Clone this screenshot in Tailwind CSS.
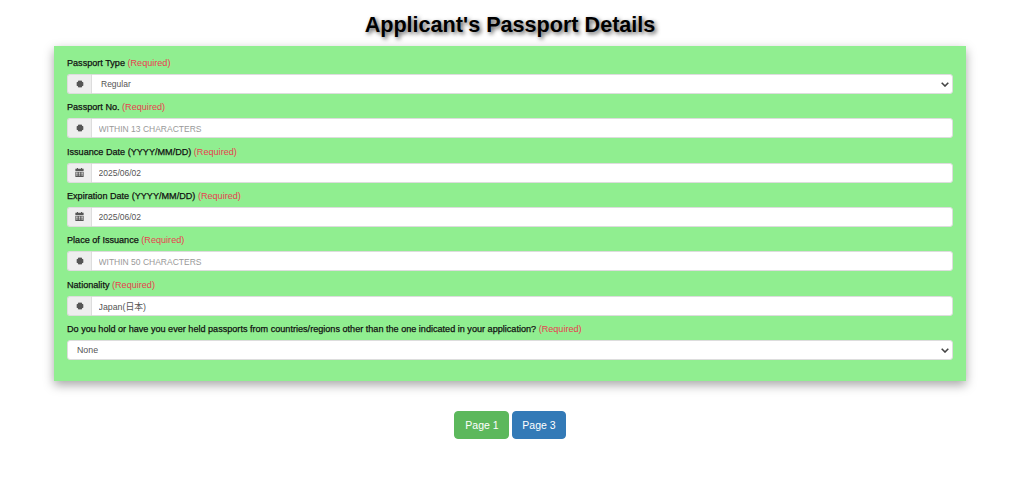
<!DOCTYPE html>
<html lang="en">
<head>
<meta charset="utf-8">
<title>Applicant's Passport Details</title>
<script src="https://cdn.jsdelivr.net/npm/@tailwindcss/browser@4"></script>
</head>
<body class="bg-white font-['Liberation_Sans',Arial,sans-serif] text-[#333]">
<div class="w-[1020px]">
<h1 class="h-[46px] pt-[12px] text-center text-[21.6px] leading-[26px] font-bold text-black [text-shadow:2px_2px_4px_#555]">Applicant's Passport Details</h1>
<main class="mx-[54px] h-[335px] w-[912px] bg-[#90ee90] px-[13px] pt-[11px] shadow-[0_4px_10px_rgba(0,0,0,0.35)]">
  <form class="flex flex-col gap-[7.33px]">
    <div>
      <label class="mb-[4px] block h-[13px] text-[9.1px] leading-[13px] text-[#111] [-webkit-text-stroke:0.25px_#111]">Passport Type <span class="text-[#e8404f] [-webkit-text-stroke:0]">(Required)</span></label>
      <div class="flex h-[20px]">
        <span class="flex w-[24px] items-center justify-center rounded-l-[3px] border border-r-0 border-[#ddd] bg-[#eee]">
          <svg class="size-[8px] fill-[#555]" viewBox="0 0 24 24"><path d="M12 0 14.330 3.310 18 1.610 18.360 5.640 22.390 6 20.690 9.670 24 12 20.690 14.330 22.390 18 18.360 18.360 18 22.390 14.330 20.690 12 24 9.670 20.690 6 22.390 5.640 18.360 1.610 18 3.310 14.330 0 12 3.310 9.670 1.610 6 5.640 5.640 6 1.610 9.670 3.310z"/></svg>
        </span>
        <div class="relative min-w-0 flex-1">
          <select class="block h-full w-full appearance-none rounded-r-[3px] border border-[#ddd] bg-white pt-[1px] pl-[9px] text-[8.5px] text-[#555] outline-none"><option>Regular</option></select>
          <svg class="pointer-events-none absolute top-[8px] right-[4px] h-[5px] w-[8px] fill-none stroke-[#444] stroke-[1.6]" viewBox="0 0 8 5"><path d="M.7.8 4 4l3.300-3.200"/></svg>
        </div>
      </div>
    </div>
    <div>
      <label class="mb-[4px] block h-[13px] text-[9.1px] leading-[13px] text-[#111] [-webkit-text-stroke:0.25px_#111]">Passport No. <span class="text-[#e8404f] [-webkit-text-stroke:0]">(Required)</span></label>
      <div class="flex h-[20px]">
        <span class="flex w-[24px] items-center justify-center rounded-l-[3px] border border-r-0 border-[#ddd] bg-[#eee]">
          <svg class="size-[8px] fill-[#555]" viewBox="0 0 24 24"><path d="M12 0 14.330 3.310 18 1.610 18.360 5.640 22.390 6 20.690 9.670 24 12 20.690 14.330 22.390 18 18.360 18.360 18 22.390 14.330 20.690 12 24 9.670 20.690 6 22.390 5.640 18.360 1.610 18 3.310 14.330 0 12 3.310 9.670 1.610 6 5.640 5.640 6 1.610 9.670 3.310z"/></svg>
        </span>
        <input class="h-full min-w-0 flex-1 rounded-r-[3px] border border-[#ddd] bg-white px-[6.500px] pt-[1px] text-[8.5px] text-[#555] outline-none placeholder:text-[#999]" placeholder="WITHIN 13 CHARACTERS">
      </div>
    </div>
    <div>
      <label class="mb-[4px] block h-[13px] text-[9.1px] leading-[13px] text-[#111] [-webkit-text-stroke:0.25px_#111]">Issuance Date (YYYY/MM/DD) <span class="text-[#e8404f] [-webkit-text-stroke:0]">(Required)</span></label>
      <div class="flex h-[20px]">
        <span class="flex w-[24px] items-center justify-center rounded-l-[3px] border border-r-0 border-[#ddd] bg-[#eee]">
          <svg class="size-[9px] fill-[#555]" viewBox="0 0 24 24"><path d="M1 2h4V0h3v2h8V0h3v2h4v22H1zM1 8v2h22V8zM3 12v3h4v-3zm7 0v3h4v-3zm7 0v3h4v-3zM3 17v3h4v-3zm7 0v3h4v-3zm7 0v3h4v-3z"/></svg>
        </span>
        <input class="h-full min-w-0 flex-1 rounded-r-[3px] border border-[#ddd] bg-white px-[6.500px] pt-[1px] text-[8.5px] text-[#555] outline-none" value="2025/06/02">
      </div>
    </div>
    <div>
      <label class="mb-[4px] block h-[13px] text-[9.1px] leading-[13px] text-[#111] [-webkit-text-stroke:0.25px_#111]">Expiration Date (YYYY/MM/DD) <span class="text-[#e8404f] [-webkit-text-stroke:0]">(Required)</span></label>
      <div class="flex h-[20px]">
        <span class="flex w-[24px] items-center justify-center rounded-l-[3px] border border-r-0 border-[#ddd] bg-[#eee]">
          <svg class="size-[9px] fill-[#555]" viewBox="0 0 24 24"><path d="M1 2h4V0h3v2h8V0h3v2h4v22H1zM1 8v2h22V8zM3 12v3h4v-3zm7 0v3h4v-3zm7 0v3h4v-3zM3 17v3h4v-3zm7 0v3h4v-3zm7 0v3h4v-3z"/></svg>
        </span>
        <input class="h-full min-w-0 flex-1 rounded-r-[3px] border border-[#ddd] bg-white px-[6.500px] pt-[1px] text-[8.5px] text-[#555] outline-none" value="2025/06/02">
      </div>
    </div>
    <div>
      <label class="mb-[4px] block h-[13px] text-[9.1px] leading-[13px] text-[#111] [-webkit-text-stroke:0.25px_#111]">Place of Issuance <span class="text-[#e8404f] [-webkit-text-stroke:0]">(Required)</span></label>
      <div class="flex h-[20px]">
        <span class="flex w-[24px] items-center justify-center rounded-l-[3px] border border-r-0 border-[#ddd] bg-[#eee]">
          <svg class="size-[8px] fill-[#555]" viewBox="0 0 24 24"><path d="M12 0 14.330 3.310 18 1.610 18.360 5.640 22.390 6 20.690 9.670 24 12 20.690 14.330 22.390 18 18.360 18.360 18 22.390 14.330 20.690 12 24 9.670 20.690 6 22.390 5.640 18.360 1.610 18 3.310 14.330 0 12 3.310 9.670 1.610 6 5.640 5.640 6 1.610 9.670 3.310z"/></svg>
        </span>
        <input class="h-full min-w-0 flex-1 rounded-r-[3px] border border-[#ddd] bg-white px-[6.500px] pt-[1px] text-[8.5px] text-[#555] outline-none placeholder:text-[#999]" placeholder="WITHIN 50 CHARACTERS">
      </div>
    </div>
    <div>
      <label class="mb-[4px] block h-[13px] text-[9.1px] leading-[13px] text-[#111] [-webkit-text-stroke:0.25px_#111]">Nationality <span class="text-[#e8404f] [-webkit-text-stroke:0]">(Required)</span></label>
      <div class="flex h-[20px]">
        <span class="flex w-[24px] items-center justify-center rounded-l-[3px] border border-r-0 border-[#ddd] bg-[#eee]">
          <svg class="size-[8px] fill-[#555]" viewBox="0 0 24 24"><path d="M12 0 14.330 3.310 18 1.610 18.360 5.640 22.390 6 20.690 9.670 24 12 20.690 14.330 22.390 18 18.360 18.360 18 22.390 14.330 20.690 12 24 9.670 20.690 6 22.390 5.640 18.360 1.610 18 3.310 14.330 0 12 3.310 9.670 1.610 6 5.640 5.640 6 1.610 9.670 3.310z"/></svg>
        </span>
        <input class="h-full min-w-0 flex-1 rounded-r-[3px] border border-[#ddd] bg-white px-[6.500px] pt-[1px] font-['Liberation_Sans','Noto_Sans_CJK_JP',sans-serif] text-[8.8px] text-[#555] outline-none" value="Japan(日本)">
      </div>
    </div>
    <div>
      <label class="mb-[4px] block h-[13px] text-[9.1px] leading-[13px] text-[#111] [-webkit-text-stroke:0.25px_#111]">Do you hold or have you ever held passports from countries/regions other than the one indicated in your application? <span class="text-[#e8404f] [-webkit-text-stroke:0]">(Required)</span></label>
      <div class="relative h-[20px]">
        <select class="block h-full w-full appearance-none rounded-[3px] border border-[#ddd] bg-white pt-[1px] pl-[9px] text-[8.8px] text-[#555] outline-none"><option>None</option></select>
        <svg class="pointer-events-none absolute top-[8px] right-[4px] h-[5px] w-[8px] fill-none stroke-[#444] stroke-[1.6]" viewBox="0 0 8 5"><path d="M.7.8 4 4l3.300-3.200"/></svg>
      </div>
    </div>
  </form>
</main>
<nav class="mt-[30px] flex justify-center gap-[3px]">
  <a class="flex h-[28px] w-[55px] items-center justify-center rounded-[4px] border border-[#5cb85c] bg-[#5cb85c] pt-[1px] pl-[1px] text-[10.5px] text-white">Page 1</a>
  <a class="flex h-[28px] w-[54px] items-center justify-center rounded-[4px] border border-[#337ab7] bg-[#337ab7] pt-[1px] text-[10.5px] text-white">Page 3</a>
</nav>
</div>
</body>
</html>
